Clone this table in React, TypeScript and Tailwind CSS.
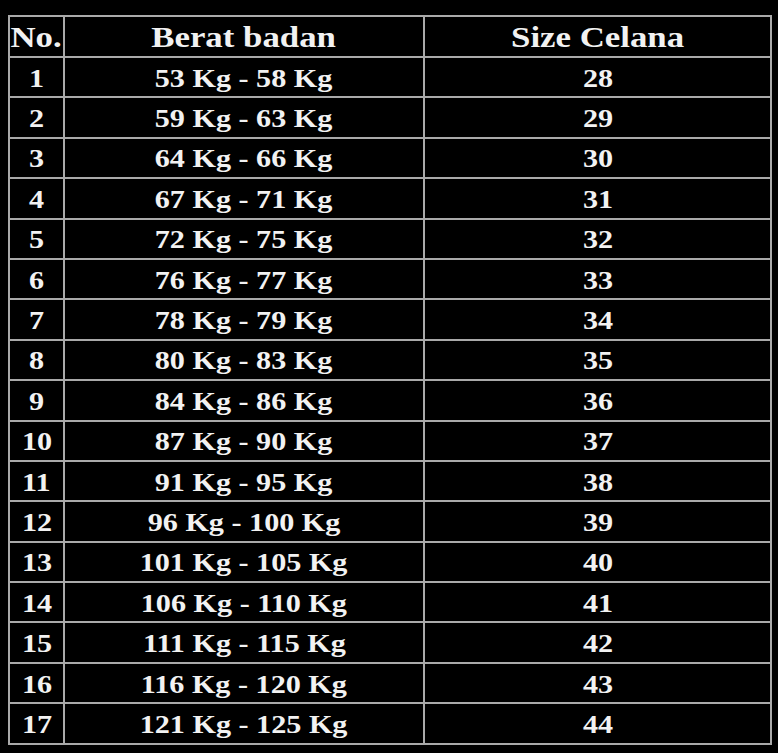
import React from 'react';

const rows: [string, string][] = [
  ['53 Kg - 58 Kg', '28'],
  ['59 Kg - 63 Kg', '29'],
  ['64 Kg - 66 Kg', '30'],
  ['67 Kg - 71 Kg', '31'],
  ['72 Kg - 75 Kg', '32'],
  ['76 Kg - 77 Kg', '33'],
  ['78 Kg - 79 Kg', '34'],
  ['80 Kg - 83 Kg', '35'],
  ['84 Kg - 86 Kg', '36'],
  ['87 Kg - 90 Kg', '37'],
  ['91 Kg - 95 Kg', '38'],
  ['96 Kg - 100 Kg', '39'],
  ['101 Kg - 105 Kg', '40'],
  ['106 Kg - 110 Kg', '41'],
  ['111 Kg - 115 Kg', '42'],
  ['116 Kg - 120 Kg', '43'],
  ['121 Kg - 125 Kg', '44'],
];

const Txt: React.FC<{ children: React.ReactNode }> = ({ children }) => (
  <span className="inline-block scale-x-116 whitespace-nowrap">{children}</span>
);

const App: React.FC = () => {
  return (
    <div className="w-[778px] h-[753px] bg-black pt-[15px] pl-[8px] font-['Liberation_Serif','Times_New_Roman',serif] font-bold text-[#f2f2f2]">
      <table className="table-fixed border-collapse w-[762px]">
        <colgroup>
          <col className="w-[55px]" />
          <col className="w-[360px]" />
          <col className="w-[347px]" />
        </colgroup>
        <thead>
          <tr className="h-[41px] text-[30px] leading-none">
            <th className="border-2 border-[#a9a9a9] text-center p-0"><Txt>No.</Txt></th>
            <th className="border-2 border-[#a9a9a9] text-center p-0"><Txt>Berat badan</Txt></th>
            <th className="border-2 border-[#a9a9a9] text-center p-0"><Txt>Size Celana</Txt></th>
          </tr>
        </thead>
        <tbody>
          {rows.map(([berat, size], i) => (
            <tr key={i} className="h-[40.4px] text-[26px] leading-none">
              <td className="border-2 border-[#a9a9a9] text-center p-0 pt-[3px]"><Txt>{i + 1}</Txt></td>
              <td className="border-2 border-[#a9a9a9] text-center p-0 pt-[3px]"><Txt>{berat}</Txt></td>
              <td className="border-2 border-[#a9a9a9] text-center p-0 pt-[3px]"><Txt>{size}</Txt></td>
            </tr>
          ))}
        </tbody>
      </table>
    </div>
  );
};

export default App;
